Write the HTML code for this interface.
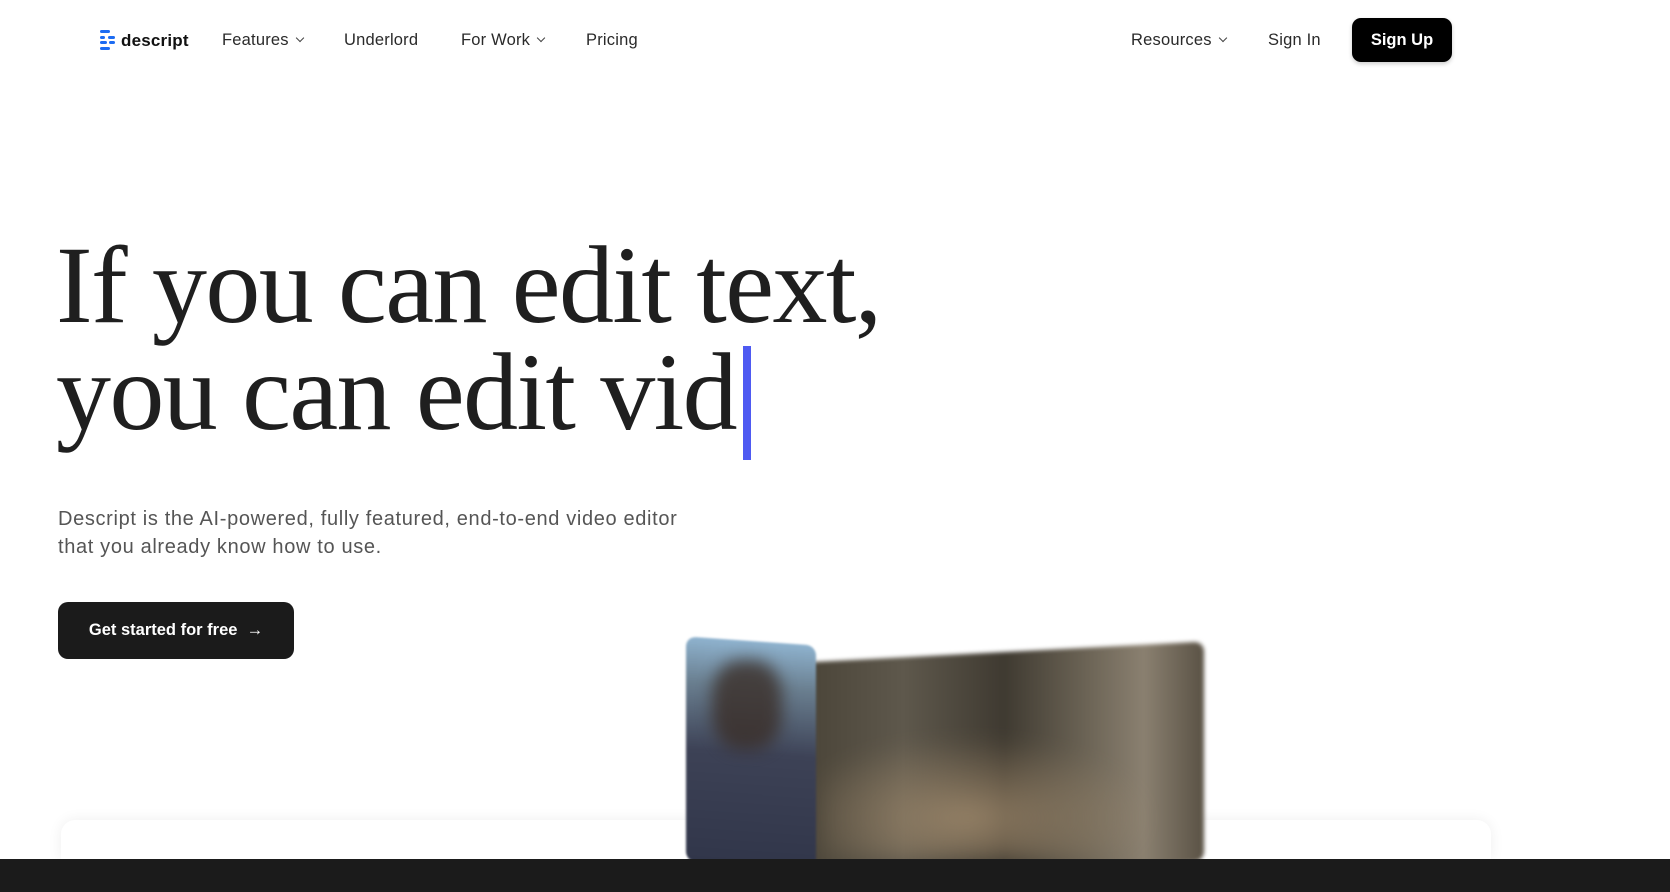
<!DOCTYPE html>
<html style="overflow:hidden;width:1670px;height:892px"><head><meta charset="utf-8"><style>
*{margin:0;padding:0;box-sizing:border-box}
body{width:1670px;height:892px;overflow:hidden;background:#fff;font-family:"Liberation Sans",sans-serif;color:#1b1b1b;position:relative}
.nav{position:absolute;top:31px;font-size:16.5px;color:#2a2a2a;white-space:nowrap;letter-spacing:.2px}
.chev{display:inline-block;width:6px;height:6px;border-right:1.3px solid #444;border-bottom:1.3px solid #444;transform:rotate(45deg);margin-left:8px;position:relative;top:-4px}
h1{position:absolute;left:56px;top:232px;font-family:"Liberation Serif",serif;font-weight:400;font-size:110px;line-height:107px;letter-spacing:-1.6px;color:#1f1f1f;white-space:nowrap}
.cur{position:absolute;left:743px;top:346px;width:8px;height:114px;background:#4e5af2}
p{position:absolute;left:58px;top:505px;font-size:20px;line-height:28px;color:#555;letter-spacing:.65px;white-space:nowrap}
.btn{position:absolute;left:58px;top:602px;width:236px;height:57px;background:#1b1b1b;border-radius:10px;color:#fff;font-weight:bold;font-size:16.5px;display:flex;align-items:center;justify-content:center}
.card{position:absolute;left:61px;top:820px;width:1430px;height:39px;background:#fff;border-radius:14px 14px 0 0;box-shadow:0 0 14px rgba(0,0,0,.07)}
.band{position:absolute;left:0;top:859px;width:1670px;height:33px;background:#1b1b1b}
</style></head><body>
<div class="nav" style="left:99px;top:29px;font-weight:bold;font-size:17px;color:#111">
<svg width="18" height="22" viewBox="0 0 18 22" style="vertical-align:-5px;margin-right:4px"><g fill="#1d6cf2"><rect x="1" y="1" width="10" height="3" rx="1.5"/><rect x="1" y="7" width="5" height="3" rx="1.5"/><rect x="9" y="7" width="7" height="3" rx="1.5"/><rect x="1" y="12" width="7" height="3" rx="1.5"/><rect x="10" y="12" width="6" height="3" rx="1.5"/><rect x="1" y="18" width="10" height="3" rx="1.5"/></g></svg>descript</div>
<div class="nav" style="left:222px">Features<span class="chev"></span></div>
<div class="nav" style="left:344px">Underlord</div>
<div class="nav" style="left:461px">For Work<span class="chev"></span></div>
<div class="nav" style="left:586px">Pricing</div>
<div class="nav" style="left:1131px">Resources<span class="chev"></span></div>
<div class="nav" style="left:1268px">Sign In</div>
<div style="position:absolute;left:1352px;top:18px;width:100px;height:44px;background:#000;border-radius:9px;color:#fff;font-weight:bold;font-size:16.5px;display:flex;align-items:center;justify-content:center;box-shadow:0 2px 4px rgba(0,0,0,.2)">Sign Up</div>
<h1>If you can edit text,<br>you can edit vid</h1>
<div class="cur"></div>
<p>Descript is the AI-powered, fully featured, end-to-end video editor<br>that you already know how to use.</p>
<div class="btn">Get started for free&nbsp;&nbsp;→</div>
<div class="card"></div>
<div style="position:absolute;left:804px;top:652px;width:400px;height:220px;border-radius:10px;transform:skewY(-3deg);background:linear-gradient(90deg,#4a4438 0%,#5e584c 25%,#3f3a31 50%,#6a6254 70%,#8a8070 85%,#5a5245 100%);filter:blur(2px)"></div>
<div style="position:absolute;left:820px;top:720px;width:370px;height:140px;background:radial-gradient(ellipse at 40% 70%,#b49a78 0%,transparent 60%);filter:blur(10px);opacity:.7"></div>
<div style="position:absolute;left:686px;top:641px;width:130px;height:225px;border-radius:10px;transform:skewY(4deg);background:linear-gradient(180deg,#8fb3cf 0%,#6a7f90 20%,#3d4256 50%,#31364a 100%);filter:blur(1px)"></div>
<div style="position:absolute;left:712px;top:660px;width:70px;height:90px;border-radius:40%;background:#3a2e28;filter:blur(8px);opacity:.8"></div>
<div class="band"></div>
</body></html>
